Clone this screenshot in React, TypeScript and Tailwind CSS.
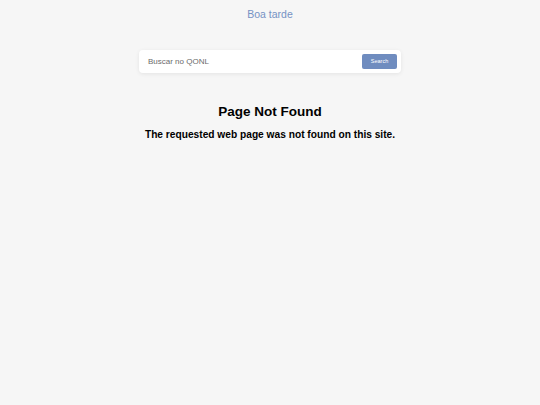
export default function App() {
  return (
    <div className="min-h-[405px] w-full bg-[#f6f6f6] font-['Liberation_Sans',Arial,sans-serif]">
      <div className="flex flex-col items-center pt-[7px]">
        <div className="text-[10.5px] leading-[14px] text-[#7592c4]">Boa tarde</div>
        <div className="mt-[29px] flex h-[23px] w-[262px] items-center justify-between rounded-[4px] bg-white pl-[9px] pr-[4px] shadow-[0_1px_4px_rgba(0,0,0,0.08)]">
          <span className="text-[8px] text-[#6b6b6b]">Buscar no QONL</span>
          <button className="flex h-[15px] w-[35px] items-center justify-center rounded-[2px] bg-[#6f8cbf] text-[5.5px] text-white">
            Search
          </button>
        </div>
        <h1 className="mt-[30px] text-[13.5px] font-bold leading-[18px] text-black">Page Not Found</h1>
        <h2 className="mt-[7px] text-[10.2px] font-bold leading-[13px] text-black">
          The requested web page was not found on this site.
        </h2>
      </div>
    </div>
  );
}
